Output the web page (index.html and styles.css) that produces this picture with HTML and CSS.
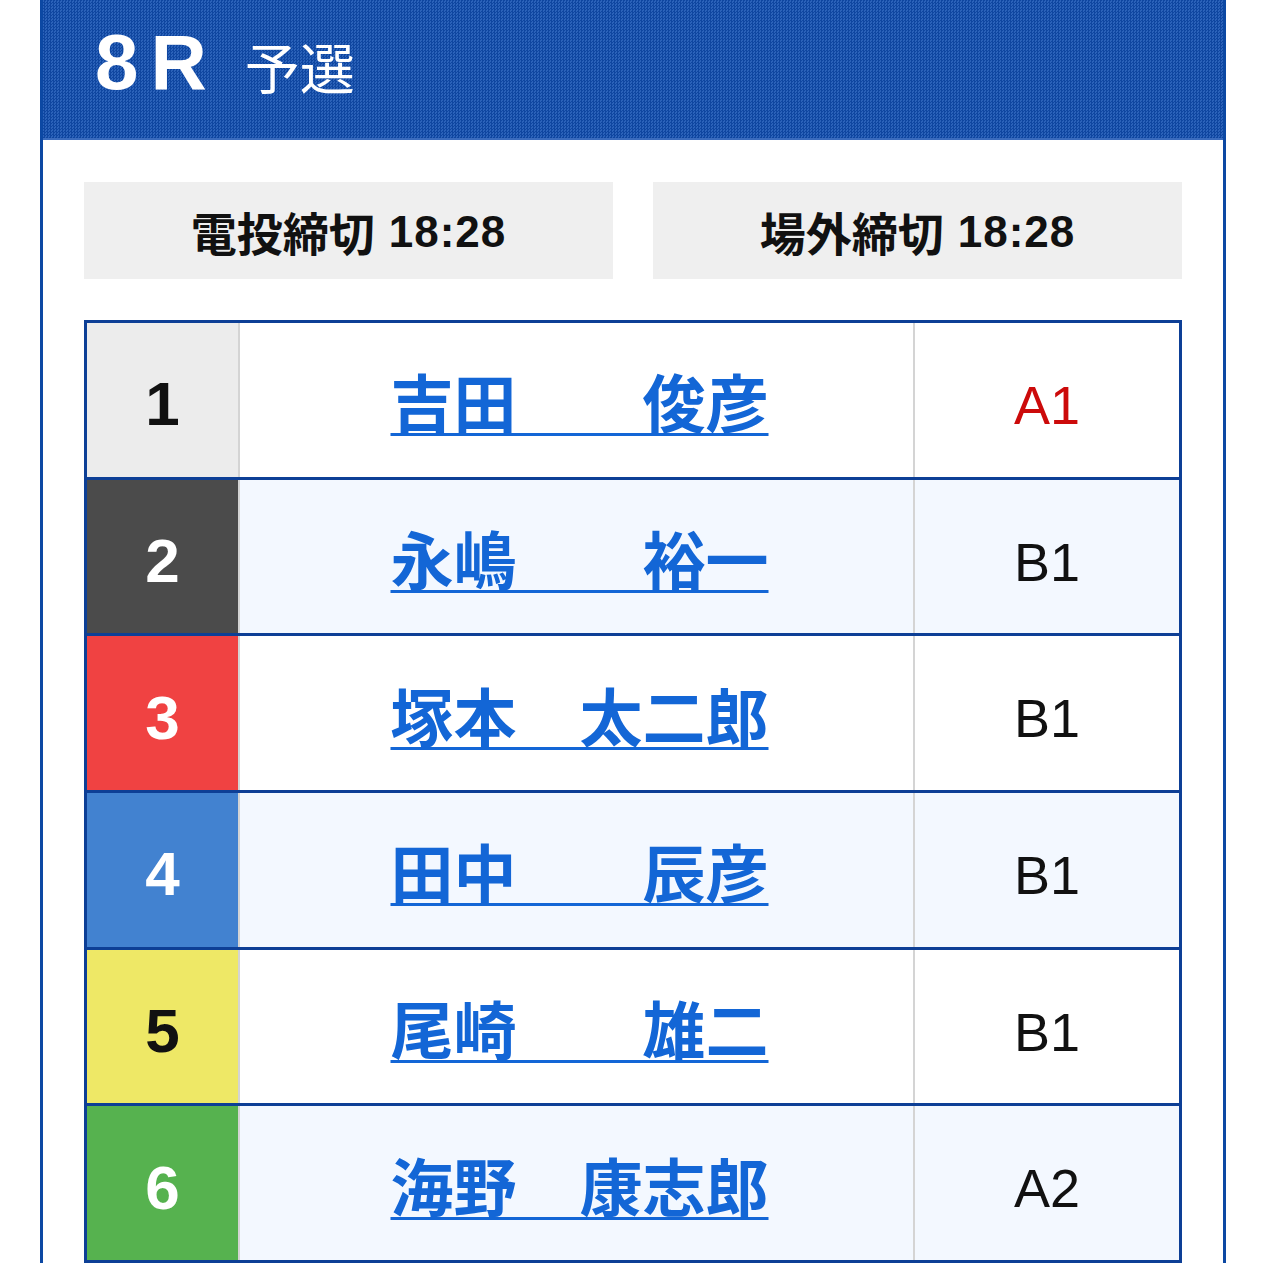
FILE: index.html
```html
<!DOCTYPE html>
<html lang="ja">
<head>
<meta charset="utf-8">
<title>8R 予選</title>
<link rel="stylesheet" href="styles.css">
</head>
<body>
<div class="race">
  <div class="race-head">
    <span class="race-no">8R</span>
    <span class="race-name">予選</span>
  </div>
  <div class="race-body">
    <div class="deadlines">
      <div class="deadline"><span class="dl-label">電投締切</span> <span class="dl-time">18:28</span></div>
      <div class="deadline"><span class="dl-label">場外締切</span> <span class="dl-time">18:28</span></div>
    </div>
    <div class="entries">
      <div class="entry">
        <div class="num n1">1</div>
        <div class="name"><a href="#">吉田　　俊彦</a></div>
        <div class="cls cls-a1">A1</div>
      </div>
      <div class="entry alt">
        <div class="num n2">2</div>
        <div class="name"><a href="#">永嶋　　裕一</a></div>
        <div class="cls">B1</div>
      </div>
      <div class="entry">
        <div class="num n3">3</div>
        <div class="name"><a href="#">塚本　太二郎</a></div>
        <div class="cls">B1</div>
      </div>
      <div class="entry alt">
        <div class="num n4">4</div>
        <div class="name"><a href="#">田中　　辰彦</a></div>
        <div class="cls">B1</div>
      </div>
      <div class="entry">
        <div class="num n5">5</div>
        <div class="name"><a href="#">尾崎　　雄二</a></div>
        <div class="cls">B1</div>
      </div>
      <div class="entry alt">
        <div class="num n6">6</div>
        <div class="name"><a href="#">海野　康志郎</a></div>
        <div class="cls">A2</div>
      </div>
    </div>
  </div>
</div>
</body>
</html>
```

FILE: styles.css
```css
html, body {
  margin: 0;
  padding: 0;
  background: #ffffff;
}

body {
  font-family: "Liberation Sans", Arial, "Noto Sans CJK JP", sans-serif;
  color: #000;
}

.race {
  margin: 0 41px 0 40px;
  border-left: 3px solid #0c48a3;
  border-right: 3px solid #0c48a3;
}

.race-head {
  height: 140px;
  box-sizing: border-box;
  padding: 22px 0 0 52px;
  display: flex;
  align-items: baseline;
  background-color: #1a52ab;
  background-image: repeating-conic-gradient(#0f46a0 0 25%, #2b62b9 0 50%);
  background-size: 3px 3px;
  color: #ffffff;
  border-bottom: 2px solid #3a6bbd;
}

.race-no {
  font-family: "Liberation Sans", Arial, sans-serif;
  font-weight: 700;
  font-size: 78px;
  line-height: 80px;
  letter-spacing: 12px;
}

.race-name {
  font-family: "Noto Sans CJK JP", sans-serif;
  font-weight: 400;
  font-size: 55px;
  margin-left: 26px;
}

.race-body {
  padding: 42px 41px 0 41px;
}

.deadlines {
  display: grid;
  grid-template-columns: 1fr 1fr;
  gap: 40px;
}

.deadline {
  height: 97px;
  background: #efefef;
  display: flex;
  align-items: center;
  justify-content: center;
  gap: 14px;
  font-weight: 700;
  color: #111;
}

.dl-label {
  font-family: "Noto Sans CJK JP", sans-serif;
  font-size: 46px;
  letter-spacing: 0;
}

.dl-time {
  font-family: "Liberation Sans", Arial, sans-serif;
  font-size: 44px;
  letter-spacing: 1px;
  padding-top: 2px;
}

.entries {
  margin-top: 41px;
  border: 3px solid #0d3f96;
  border-bottom: none;
}

.entry {
  display: grid;
  grid-template-columns: 153px 675px 1fr;
  height: 156.7px;
  box-sizing: border-box;
  border-bottom: 3px solid #0d3f96;
  background: #ffffff;
}

.entry.alt {
  background: #f3f8ff;
}

.num {
  display: flex;
  align-items: center;
  justify-content: center;
  padding-top: 8px;
  border-right: 2px solid #d4d4d4;
  font-family: "Liberation Sans", Arial, sans-serif;
  font-weight: 700;
  font-size: 62px;
}

.n1 { background: #ececec; color: #111; }
.n2 { background: #4b4b4b; color: #fff; }
.n3 { background: #f04242; color: #fff; }
.n4 { background: #4282d0; color: #fff; }
.n5 { background: #eee866; color: #111; }
.n6 { background: #56b24f; color: #fff; }

.name {
  display: flex;
  align-items: center;
  justify-content: center;
  border-right: 2px solid #d4d4d4;
}

.name a {
  font-family: "Noto Sans CJK JP", sans-serif;
  font-weight: 700;
  font-size: 63px;
  line-height: 1;
  color: #1366d6;
  text-decoration: underline;
  text-decoration-thickness: 3px;
  text-underline-offset: 6px;
  margin-left: 6px;
}

.cls {
  display: flex;
  align-items: center;
  justify-content: center;
  padding-top: 10px;
  font-family: "Liberation Sans", Arial, sans-serif;
  font-size: 54px;
  color: #111;
}

.cls-a1 {
  color: #cc0a0a;
}
```
